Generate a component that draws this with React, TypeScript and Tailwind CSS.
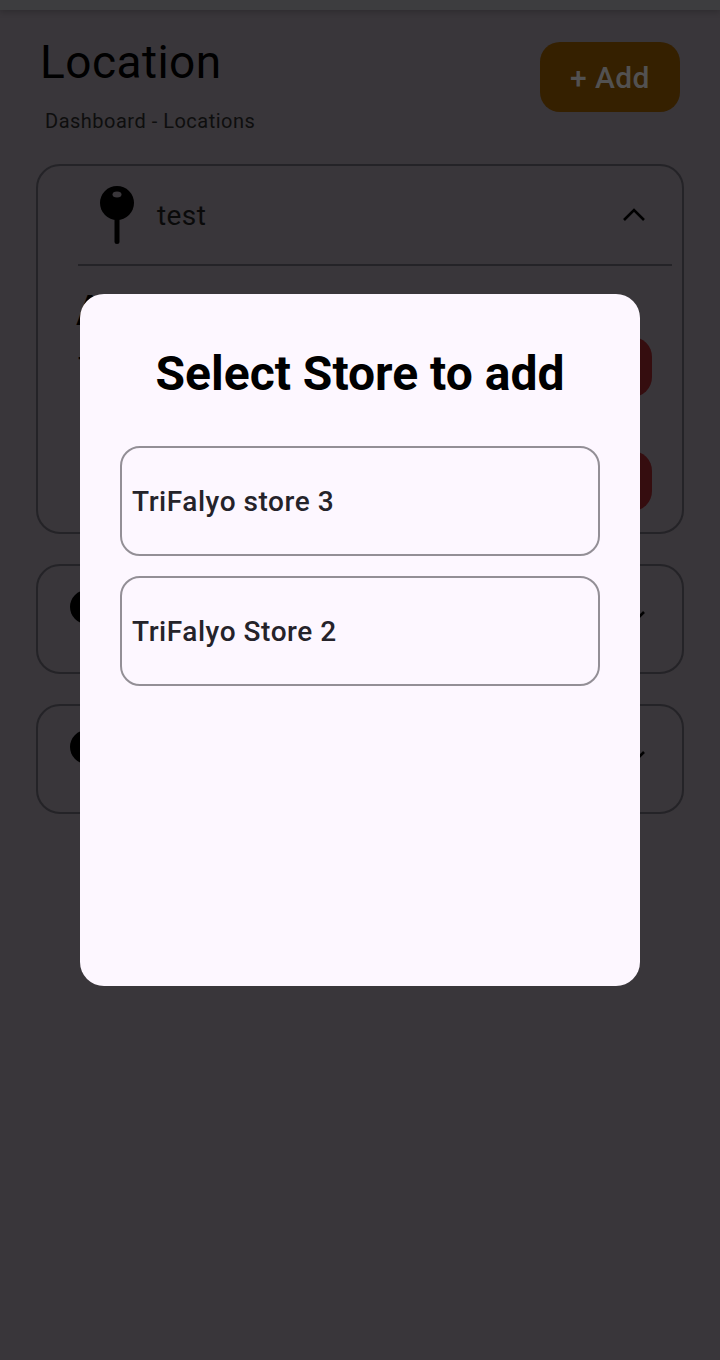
import React from "react";

const font = { fontFamily: "Roboto, 'Noto Sans', sans-serif" };

function Pin() {
  return (
    <svg width="36" height="60" viewBox="0 0 36 60" className="shrink-0">
      <ellipse cx="18" cy="18" rx="17" ry="17" fill="#000" />
      <ellipse cx="18" cy="9.5" rx="4.5" ry="3" fill="#39363a" />
      <rect x="15.5" y="32" width="5" height="27" rx="2.5" fill="#000" />
    </svg>
  );
}

function Chevron({ up }: { up?: boolean }) {
  return (
    <svg width="24" height="16" viewBox="0 0 24 16" fill="none" className="shrink-0">
      <path d={up ? "M2 13 L12 3 L22 13" : "M2 3 L12 13 L22 3"} stroke="#000" strokeWidth="2.6" />
    </svg>
  );
}

function Collapsed() {
  return (
    <div className="h-[110px] rounded-[24px] border-2 border-[#242327] flex items-center pl-[32px] pr-[36px] justify-between">
      <div className="w-[34px] h-[34px] rounded-full bg-black -mt-[24px]" />
      <div className="-mt-[4px]"><Chevron /></div>
    </div>
  );
}

export default function App() {
  return (
    <div className="relative w-[720px] h-[1360px] overflow-hidden bg-[#39363a]" style={font}>
      <div className="h-[10px] bg-[#3d3d3f] shadow-[0_2px_6px_rgba(0,0,0,0.2)]" />

      <div className="pt-[32px] px-[36px]">
        <div className="flex justify-between pr-[4px] h-[122px]">
          <div className="pl-[4px]">
            <div className="text-[46px] leading-[40px] mt-[-7px] text-black tracking-[0.45px] h-[54px] flex items-center">Location</div>
            <div className="text-[20px] leading-[24px] text-[#0e0e0e] pl-[5px] mt-[20px] tracking-[0.5px]">Dashboard - Locations</div>
          </div>
          <div className="w-[140px] h-[70px] rounded-[20px] bg-[#352000] flex items-center justify-center text-[30px] font-medium text-[#525151] tracking-[0.4px]">
            + Add
          </div>
        </div>

        <div className="h-[370px] rounded-[24px] border-2 border-[#242327] pl-[40px] pr-[10px]">
          <div className="h-[100px] flex items-center justify-between border-b-2 border-[#242327]">
            <div className="flex items-center pl-[21px] gap-[22px]">
              <Pin />
              <span className="text-[28px] text-[#0a0a0a] tracking-[0.4px] pt-[1px]">test</span>
            </div>
            <div className="pr-[26px]"><Chevron up /></div>
          </div>
          <div className="flex justify-between">
            <div className="text-black">
              <div className="text-[42px] leading-[50px] mt-[20px] -ml-[2px] font-medium">A</div>
              <div className="text-[28px] leading-[32px] mt-[16px]">T</div>
            </div>
            <div className="flex flex-col gap-[54px] pt-[71px] pr-[20px]">
              <div className="w-[120px] h-[60px] rounded-[20px] bg-[#350d0f]" />
              <div className="w-[120px] h-[60px] rounded-[20px] bg-[#350d0f]" />
            </div>
          </div>
        </div>

        <div className="flex flex-col gap-[30px] mt-[30px]">
          <Collapsed />
          <Collapsed />
        </div>
      </div>

      <div className="absolute left-[80px] top-[294px] w-[560px] h-[692px] rounded-[24px] bg-[#fdf7ff] px-[40px] pt-[52px]">
        <div className="text-[48px] leading-[56px] font-bold text-black text-center">Select Store to add</div>
        <div className="flex flex-col gap-[20px] mt-[44px]">
          {["TriFalyo store 3", "TriFalyo Store 2"].map((s) => (
            <div key={s} className="h-[110px] rounded-[20px] border-2 border-[#938f96] flex items-center pl-[10px] pt-[2px] text-[28px] font-medium text-[#25232a] tracking-[0.55px]">
              {s}
            </div>
          ))}
        </div>
      </div>
    </div>
  );
}
